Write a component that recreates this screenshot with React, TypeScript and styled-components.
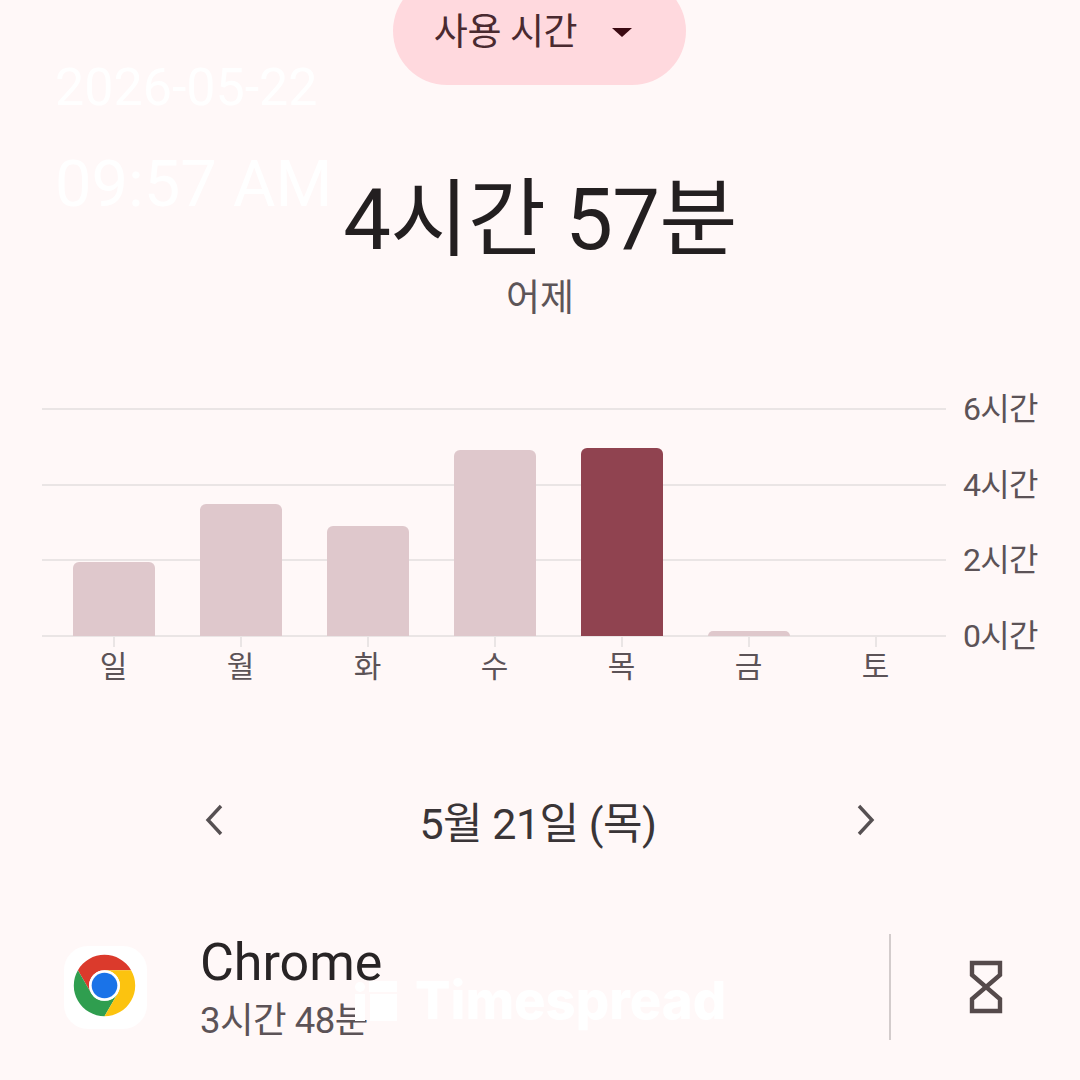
import React from "react";
import styled, { createGlobalStyle } from "styled-components";

const Global = createGlobalStyle`
  html, body { margin: 0; padding: 0; background: #fff8f8; }
  * { box-sizing: border-box; }
`;
const FONT = `Roboto, "Noto Sans CJK KR", sans-serif`;

const Page = styled.div`
  position: relative; width: 1080px; height: 1080px; overflow: hidden;
  background: #fff8f8; font-family: ${FONT}; display: flex; flex-direction: column; align-items: stretch;
`;
const Pill = styled.div`
  align-self: center; margin-top: -23px; margin-right: 2px; width: 293px; height: 108px; border-radius: 54px; flex: none;
  background: #ffd9de; color: #4a2a30; display: flex; align-items: center; justify-content: center; gap: 35px;
  font-size: 37px; letter-spacing: -0.4px; line-height: 50px; padding-right: 12px;
`;
const PillText = styled.span`
  margin-top: 3px;
`;
const Caret = styled.span`
  width: 0; height: 0; border-left: 10px solid transparent; border-right: 10px solid transparent;
  border-top: 9px solid #3b0a12; margin-top: 3px;
`;
const Title = styled.div`
  margin-top: 85px; height: 100px; line-height: 100px; text-align: center; font-size: 85px; color: #231f20; letter-spacing: -0.8px;
`;
const Subtitle = styled.div`
  margin-top: 4px; height: 50px; line-height: 50px; text-align: center; font-size: 37px; color: #5d5558;
`;
const Chart = styled.div`
  position: relative; margin-top: 84px; height: 229px; padding-left: 42px; flex: none;
`;
const GridLayer = styled.div`
  height: 100%; display: flex; flex-direction: column; justify-content: space-between;
`;
const GridRow = styled.div`
  height: 2px; display: flex; align-items: center; gap: 17px;
`;
const GridLine = styled.div`
  width: 904px; height: 2px; background: #eae5e5;
`;
const AxisLabel = styled.span`
  font-size: 32px; line-height: 2px; color: #5c5357; letter-spacing: -0.7px;
`;
const Bars = styled.div`
  position: absolute; left: 50px; bottom: 1px; display: flex; align-items: flex-end;
`;
const BarSlot = styled.div`
  width: 127px; display: flex; justify-content: center;
`;
const Bar = styled.div<{ $active?: boolean }>`
  width: 82px; border-radius: 6px 6px 0 0; background: ${p => (p.$active ? "#904350" : "#dfc8cc")};
`;
const XAxis = styled.div`
  margin-left: 50px; display: flex; flex: none;
`;
const XCol = styled.div`
  width: 127px; display: flex; flex-direction: column; align-items: center;
`;
const Tick = styled.div`
  width: 2px; height: 10px; background: #eae5e5;
`;
const XLabel = styled.div`
  height: 40px; line-height: 40px; font-size: 30px; color: #5c5357;
`;
const Nav = styled.div`
  margin: 103px 0 0 204px; width: 672px; height: 60px; display: flex; align-items: center; justify-content: space-between; flex: none; color: #565052;
`;
const DateText = styled.div`
  font-size: 43px; color: #3a3537; letter-spacing: -0.5px; margin-right: 4px;
`;
const AppRow = styled.div`
  margin-top: 84px; height: 106px; padding-left: 64px; display: flex; align-items: center; flex: none;
`;
const AppIcon = styled.div`
  width: 83px; height: 83px; border-radius: 24px; background: #fff; display: flex; align-items: center; justify-content: center;
  padding: 0 2px 3px 0;
`;
const AppInfo = styled.div`
  margin-left: 54px; width: 688px; display: flex; flex-direction: column; gap: 8px; padding-top: 2px;
`;
const AppName = styled.div`
  font-size: 52px; height: 58px; line-height: 58px; color: #282425; margin-left: -1px;
`;
const AppTime = styled.div`
  font-size: 36.5px; height: 42px; line-height: 42px; color: #5c5357; letter-spacing: -0.5px; margin-left: -1px;
`;
const Divider = styled.div`
  width: 2px; height: 106px; background: #d3cccc;
`;
const TimerSlot = styled.div`
  margin-left: 78px; display: flex;
`;
const WaterDate = styled.div`
  position: absolute; left: 55px; top: 58px; font-size: 52px; line-height: 60px; color: #fff;
`;
const WaterTime = styled.div`
  position: absolute; left: 55px; top: 148px; font-size: 65px; line-height: 72px; color: #fff;
`;
const WaterBrand = styled.div`
  position: absolute; left: 355px; top: 972px; display: flex; align-items: center; gap: 18px;
  font-size: 52.5px; line-height: 56px; font-weight: 800; color: #fff; font-family: Inter, Roboto, sans-serif;
`;

const days = [
  { d: "일", h: 74 }, { d: "월", h: 132 }, { d: "화", h: 110 }, { d: "수", h: 186 },
  { d: "목", h: 188, active: true }, { d: "금", h: 5 }, { d: "토", h: 0 },
];
const ticks = ["6시간", "4시간", "2시간", "0시간"];

export default function App() {
  return (
    <Page>
      <Global />
      <Pill>
        <PillText>사용 시간</PillText>
        <Caret />
      </Pill>
      <Title>4시간 57분</Title>
      <Subtitle>어제</Subtitle>
      <Chart>
        <GridLayer>
          {ticks.map(t => (
            <GridRow key={t}>
              <GridLine />
              <AxisLabel>{t}</AxisLabel>
            </GridRow>
          ))}
        </GridLayer>
        <Bars>
          {days.map(x => (
            <BarSlot key={x.d}>
              <Bar $active={x.active} style={{ height: x.h }} />
            </BarSlot>
          ))}
        </Bars>
      </Chart>
      <XAxis>
        {days.map(x => (
          <XCol key={x.d}>
            <Tick />
            <XLabel>{x.d}</XLabel>
          </XCol>
        ))}
      </XAxis>
      <Nav>
        <svg width="20" height="32" viewBox="0 0 20 32" fill="none" stroke="currentColor" strokeWidth="3.4">
          <path d="M17 2 L4 16 L17 30" />
        </svg>
        <DateText>5월 21일 (목)</DateText>
        <svg width="20" height="32" viewBox="0 0 20 32" fill="none" stroke="currentColor" strokeWidth="3.4">
          <path d="M3 2 L16 16 L3 30" />
        </svg>
      </Nav>
      <AppRow>
        <AppIcon>
          <svg width="67" height="67" viewBox="0 0 48 48">
            <path fill="#db3a2c" d="M4.95 13 A22 22 0 0 1 43.05 13 H24 A11 11 0 0 0 14.47 29.5 Z" />
            <path fill="#2f9e4f" d="M14.47 29.5 L4.95 13 A22 22 0 0 0 24 46 L33.53 29.5 A11 11 0 0 1 14.47 29.5 Z" />
            <path fill="#fcc30f" d="M24 13 H43.05 A22 22 0 0 1 24 46 L33.53 29.5 A11 11 0 0 0 24 13 Z" />
            <circle cx="24" cy="24" r="11" fill="#fff" />
            <circle cx="24" cy="24" r="9.2" fill="#1a73e8" />
          </svg>
        </AppIcon>
        <AppInfo>
          <AppName>Chrome</AppName>
          <AppTime>3시간 48분</AppTime>
        </AppInfo>
        <Divider />
        <TimerSlot>
          <svg width="34" height="54" viewBox="0 0 34 54" fill="none" stroke="#554a4b" strokeWidth="4.4" strokeLinejoin="miter">
            <path d="M3 3 H31 V15 L3 39 V51 H31 V39 L3 15 Z" />
          </svg>
        </TimerSlot>
      </AppRow>
      <WaterDate>2026-05-22</WaterDate>
      <WaterTime>09:57 AM</WaterTime>
      <WaterBrand>
        <svg width="42" height="41" viewBox="0 0 42 41" fill="#fff">
          <circle cx="5" cy="7" r="5" />
          <rect x="0" y="14" width="10" height="27" />
          <rect x="14" y="1" width="28" height="11" />
          <rect x="15" y="14" width="27" height="27" />
        </svg>
        <span>Timespread</span>
      </WaterBrand>
    </Page>
  );
}
